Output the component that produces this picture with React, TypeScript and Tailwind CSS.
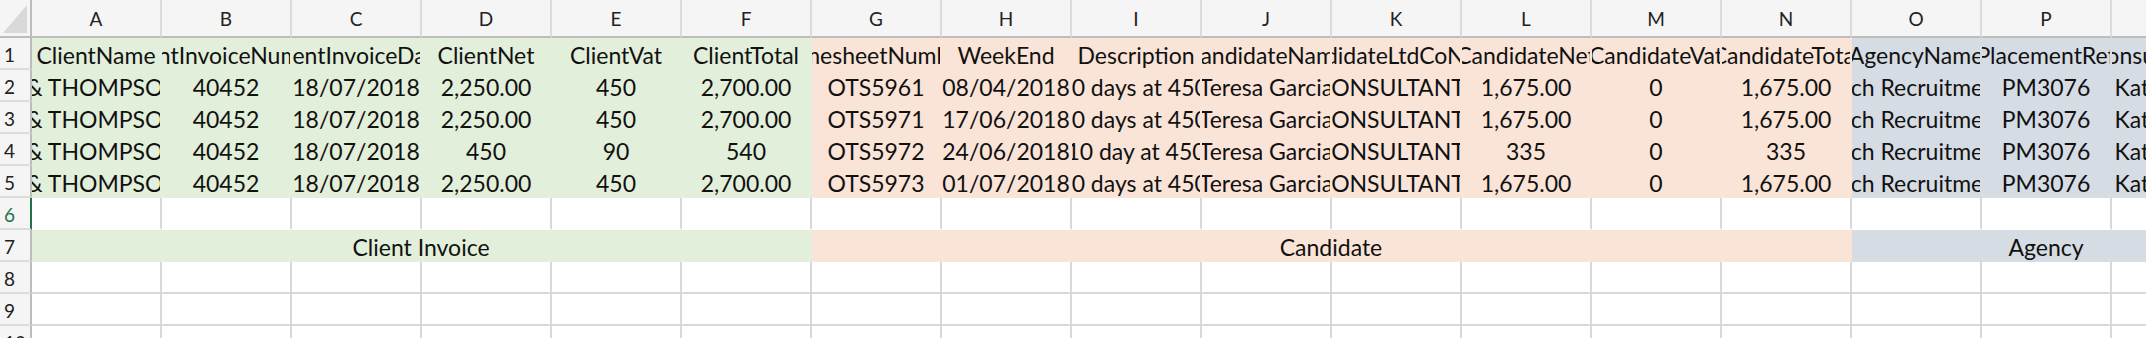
const COLS = 'ABCDEFGHIJKLMNOPQ'.split('');

const HEADERS = [
  'ClientName', 'ClientInvoiceNumber', 'ClientInvoiceDate', 'ClientNet', 'ClientVat', 'ClientTotal',
  'TimesheetNumber', 'WeekEnd', 'Description', 'CandidateName', 'CandidateLtdCoName', 'CandidateNet',
  'CandidateVat', 'CandidateTotal', 'AgencyName', 'PlacementRef', 'ConsultantName',
];

const line = (net: string, vat: string, total: string, ts: string, week: string, desc: string, cNet: string) => [
  'HALL & THOMPSON LTD', '40452', '18/07/2018', net, vat, total,
  ts, week, desc, 'Teresa Garcia', 'CONSULTANT\u00a0\u00a0', cNet, '0', cNet,
  'Tech Recruitment', 'PM3076', 'Kate Wilson',
];

const DATA = [
  HEADERS,
  line('2,250.00', '450', '2,700.00', 'OTS5961', '08/04/2018', '10 days at 450\u00a0', '1,675.00'),
  line('2,250.00', '450', '2,700.00', 'OTS5971', '17/06/2018', '10 days at 450\u00a0', '1,675.00'),
  line('450', '90', '540', 'OTS5972', '24/06/2018', '(10 day at 450)', '335'),
  line('2,250.00', '450', '2,700.00', 'OTS5973', '01/07/2018', '10 days at 450\u00a0', '1,675.00'),
];

// section fills hide their own gridlines, like Excel does
const fillFor = (c: number) =>
  c < 6 ? 'bg-[#e2efda] border-[#e2efda]' : c < 14 ? 'bg-[#f9e4d7] border-[#f9e4d7]' : 'bg-[#d6dce4] border-[#d6dce4]';

const cellText = 'flex items-end justify-center overflow-hidden border-r-2 border-b-2 text-[23px] leading-[26px] text-[#111]';

const RowHead = ({ n, active }: { n: number; active?: boolean }) => (
  <div
    className={`flex items-end overflow-hidden border-b-2 border-r-2 border-b-[#dcdcdc] bg-[#f5f5f5] pl-[4px] text-[19px] leading-[26px] ${
      active ? 'border-r-[#217346] text-[#217346]' : 'border-r-[#bdbdbd] text-[#222]'
    }`}
  >
    {n}
  </div>
);

const App = () => {
  return (
    <div className="h-[338px] w-[2146px] overflow-hidden bg-white font-[family-name:Lato,sans-serif]">
      <div className="grid grid-cols-[32px_repeat(17,130px)] grid-rows-[38px_repeat(10,32px)]">
        {/* corner */}
        <div className="flex items-end justify-end border-r-2 border-b-2 border-[#bdbdbd] bg-[#f5f5f5] pr-[3px] pb-[3px]">
          <svg width="24" height="28" viewBox="0 0 24 28">
            <polygon points="0,28 24,28 24,0" fill="#d9d9d9" />
          </svg>
        </div>
        {COLS.map((c) => (
          <div
            key={c}
            className="flex items-center justify-center border-b-2 border-r-2 border-b-[#bdbdbd] border-r-[#dcdcdc] bg-[#f5f5f5] pt-[2px] text-[19px] text-[#222]"
          >
            {c}
          </div>
        ))}

        {/* rows 1-5 */}
        {DATA.map((row, r) => (
          <div key={r} className="contents">
            <RowHead n={r + 1} />
            {row.map((v, c) => (
              <div key={c} className={`${cellText} ${fillFor(c)}`}>
                <span className="shrink-0 whitespace-nowrap">{v}</span>
              </div>
            ))}
          </div>
        ))}

        {/* row 6, selected */}
        <RowHead n={6} active />
        {COLS.map((c) => (
          <div key={c} className="border-r-2 border-b-2 border-r-[#d9d9d9] border-b-white bg-white" />
        ))}

        {/* row 7, section labels */}
        <RowHead n={7} />
        <div className={`col-span-6 ${cellText} ${fillFor(0)}`}>Client Invoice</div>
        <div className={`col-span-8 ${cellText} ${fillFor(6)}`}>Candidate</div>
        <div className={`col-span-3 ${cellText} ${fillFor(14)}`}>Agency</div>

        {/* rows 8-10 */}
        {[8, 9, 10].map((n) => (
          <div key={n} className="contents">
            <RowHead n={n} />
            {COLS.map((c) => (
              <div key={c} className="border-r-2 border-b-2 border-[#d9d9d9] bg-white" />
            ))}
          </div>
        ))}
      </div>
    </div>
  );
};

export default App;
